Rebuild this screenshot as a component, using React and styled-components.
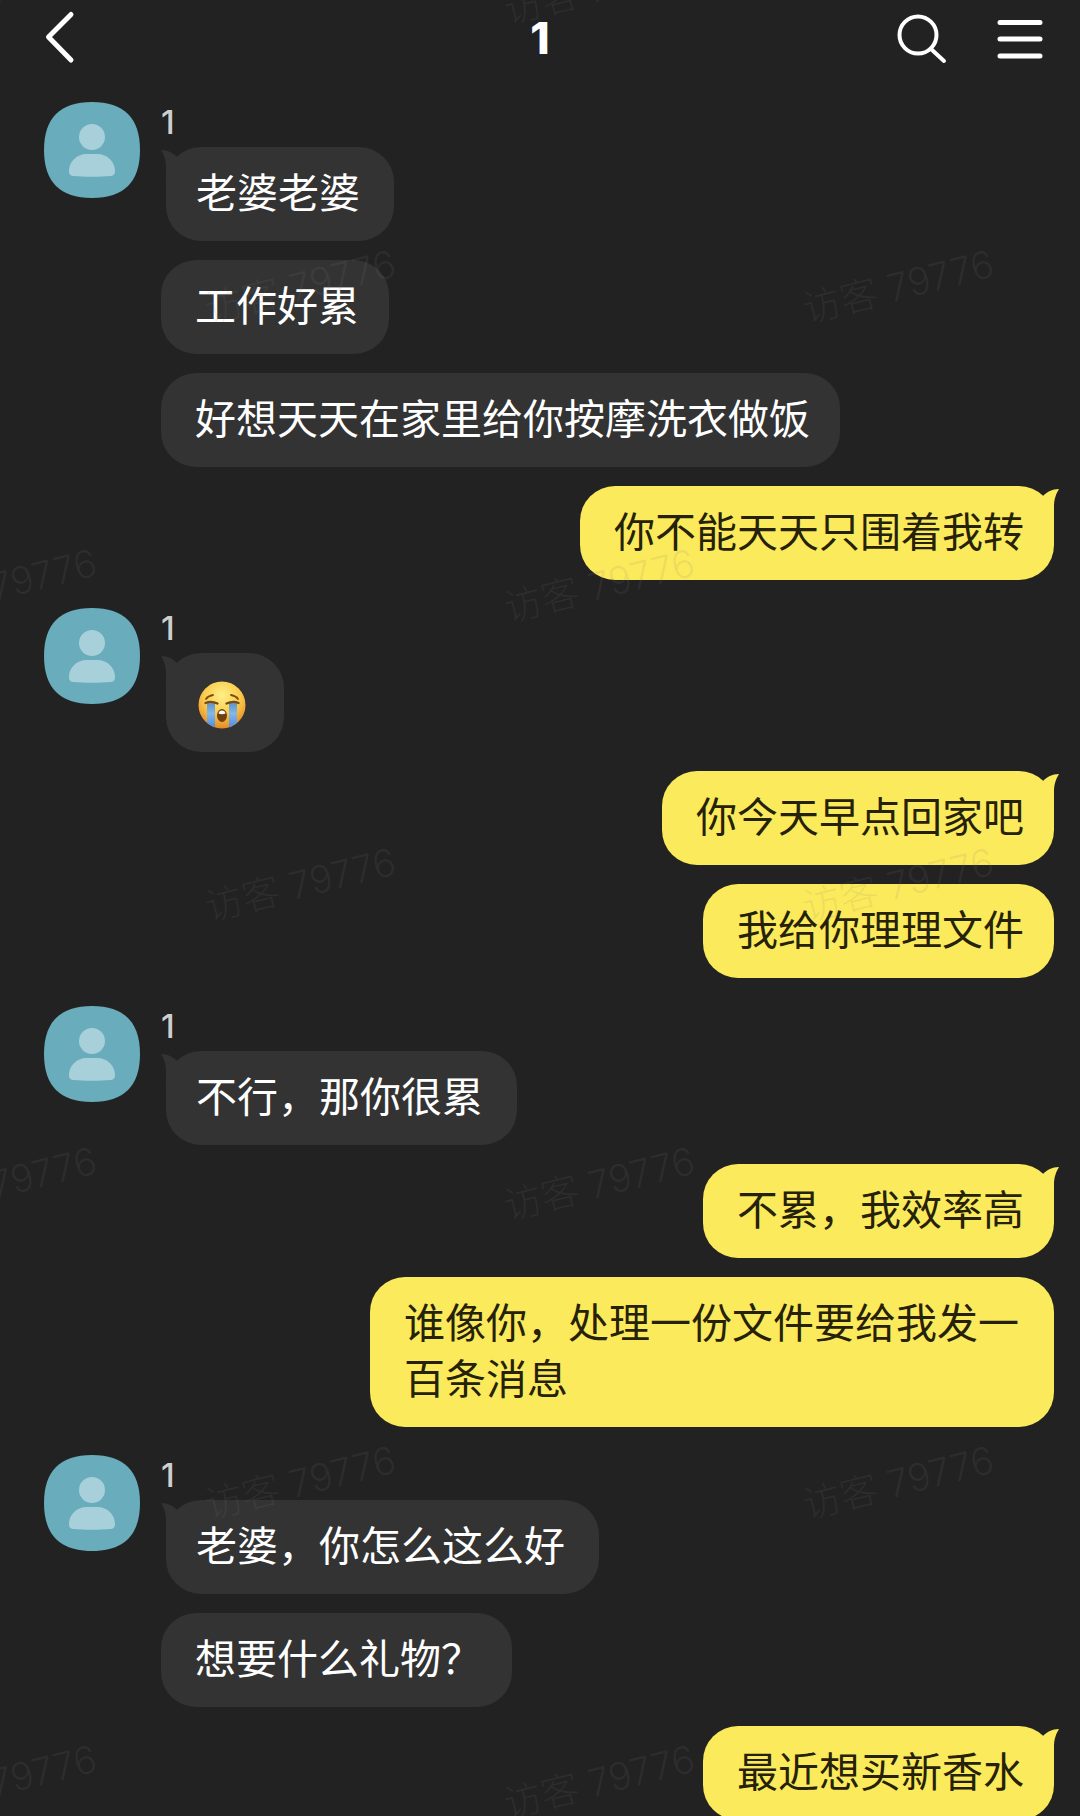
import React from "react";
import styled, { createGlobalStyle, css } from "styled-components";

const GlobalStyle = createGlobalStyle`
  *, *::before, *::after { box-sizing: border-box; }
  body {
    margin: 0;
    background: #222222;
    color: #ffffff;
    font-family: Inter, "Noto Sans CJK SC", sans-serif;
  }
`;

const Screen = styled.div`
  position: relative;
  display: flex;
  flex-direction: column;
  height: 100vh;
  overflow: hidden;
`;

const Header = styled.header`
  display: grid;
  grid-template-columns: 1fr auto 1fr;
  align-items: center;
  flex: none;
  height: 76px;
  padding: 0 36px;
`;

const Title = styled.h1`
  margin: 0;
  font-size: 44px;
  line-height: 76px;
  font-weight: 800;
`;

const Actions = styled.div`
  display: flex;
  justify-content: flex-end;
  gap: 40px;
`;

const IconButton = styled.button`
  display: flex;
  align-items: center;
  justify-content: center;
  justify-self: start;
  width: 56px;
  height: 76px;
  padding: 0;
  border: 0;
  background: none;
  color: inherit;
  cursor: pointer;

  svg {
    flex: none;
    fill: none;
    stroke: currentColor;
    stroke-width: 5;
    stroke-linecap: round;
    stroke-linejoin: round;
  }
`;

const Chat = styled.main`
  display: flex;
  flex-direction: column;
  padding: 25px 26px 0 44px;
`;

const Group = styled.section`
  display: flex;
  align-items: flex-start;
  gap: 21px;
  justify-content: ${(p) => (p.$mine ? "flex-end" : "flex-start")};
  margin-top: ${(p) => (p.$mine ? 19 : 27)}px;

  &:first-child { margin-top: 0; }
`;

const Avatar = styled.svg`
  flex: none;
  width: 96px;
  height: 97px;
`;

const Thread = styled.div`
  display: flex;
  flex-direction: column;
  align-items: ${(p) => (p.$mine ? "flex-end" : "flex-start")};
`;

const Sender = styled.h2`
  height: 46px;
  margin: 0;
  color: #cfcfcf;
  font-size: 33px;
  line-height: 42px;
  font-weight: 500;
`;

const List = styled.ul`
  display: flex;
  flex-direction: column;
  align-items: inherit;
  gap: 19px;
  margin: 0;
  padding: 0;
  list-style: none;
`;

const Bubble = styled.li`
  position: relative;
  max-width: 684px;
  padding: 15px 30px 23px 34px;
  border-radius: 35px;
  font-family: "Noto Sans CJK SC", sans-serif;
  font-size: 41px;
  line-height: 56px;
  background: ${(p) => (p.$mine ? "#fbea5b" : "#333333")};
  color: ${(p) => (p.$mine ? "#26220a" : "#ffffff")};

  ${(p) => p.$tail && !p.$mine && css`
    margin-left: 5px;
    padding-left: 30px;
    padding-right: 34px;
  `}

  ${(p) => p.$emoji && css`
    padding-top: 24px;
    padding-bottom: 21px;
  `}
`;

const TailShape = styled.svg`
  position: absolute;
  top: 3px;
  width: 16px;
  height: 32px;
  fill: ${(p) => (p.$mine ? "#fbea5b" : "#333333")};
  ${(p) => (p.$mine ? "right: -5px; transform: scaleX(-1);" : "left: -5px;")}
`;

const EmojiShape = styled.svg`
  display: block;
  width: 54px;
  height: 54px;
`;

const WatermarkLayer = styled.div`
  position: absolute;
  inset: -165px 0 0 -149px;
  display: grid;
  grid-template-columns: repeat(4, 299px);
  grid-auto-rows: 299px;
  justify-content: start;
  overflow: hidden;
  pointer-events: none;
`;

const Watermark = styled.span`
  display: flex;
  align-items: center;
  justify-content: center;
  color: rgba(128, 128, 128, 0.12);
  font-size: 38px;
  font-weight: 300;
  white-space: nowrap;
  transform: rotate(-14deg);
`;

const groups = [
  { from: "1", messages: ["老婆老婆", "工作好累", "好想天天在家里给你按摩洗衣做饭"] },
  { mine: true, messages: ["你不能天天只围着我转"] },
  { from: "1", messages: [{ emoji: true }] },
  { mine: true, messages: ["你今天早点回家吧", "我给你理理文件"] },
  { from: "1", messages: ["不行，那你很累"] },
  { mine: true, messages: ["不累，我效率高", "谁像你，处理一份文件要给我发一百条消息"] },
  { from: "1", messages: ["老婆，你怎么这么好", "想要什么礼物？"] },
  { mine: true, messages: ["最近想买新香水"] },
];

function Person() {
  return (
    <Avatar viewBox="0 0 96 97" aria-hidden="true">
      <path
        fill="#69acbb"
        d="M48 1C80 1 96 17 96 49S80 97 48 97S0 81 0 49S16 1 48 1Z"
      />
      <circle cx="48" cy="36" r="13" fill="#a8d0db" />
      <path
        fill="#a8d0db"
        d="M43 53h10c11 0 18 8 18 17c0 4-2 5-5 5c-9 1-27 1-36 0c-3 0-5-1-5-5c0-9 7-17 18-17Z"
      />
    </Avatar>
  );
}

function Tail({ mine }) {
  return (
    <TailShape $mine={mine} viewBox="0 0 16 32" aria-hidden="true">
      <path d="M0 0C7 0 12 3 16 7L16 12L5 32V18C5 10 3 5 0 0Z" />
    </TailShape>
  );
}

function CryingFace() {
  return (
    <EmojiShape viewBox="1 0 54 54" role="img" aria-label="大哭">
      <defs>
        <radialGradient id="face" cx="0.5" cy="0.3" r="0.7">
          <stop offset="0" stopColor="#fff08a" />
          <stop offset="0.55" stopColor="#fbcb4b" />
          <stop offset="1" stopColor="#e58a25" />
        </radialGradient>
        <linearGradient id="tears" x1="0" y1="0" x2="0" y2="1">
          <stop offset="0" stopColor="#5f93c4" />
          <stop offset="0.4" stopColor="#83b8ea" />
          <stop offset="1" stopColor="#4d87d6" />
        </linearGradient>
        <clipPath id="head"><circle cx="27" cy="28" r="23.5" /></clipPath>
      </defs>
      <circle cx="27" cy="28" r="23.5" fill="url(#face)" />
      <g clipPath="url(#head)">
        <path fill="url(#tears)" d="M12 26h8v26h-8ZM34 26h8v26h-8Z" />
      </g>
      <g fill="none" stroke="#7a4c12" strokeWidth="1.8" strokeLinecap="round">
        <path d="M11 22Q13 19 18 18M43 22Q41 19 36 18" />
        <path strokeWidth="2.4" d="M10.500 26Q16 23.500 22.500 26.500M43.500 26Q38 23.500 31.500 26.500" />
      </g>
      <ellipse cx="27" cy="38.500" rx="5" ry="6.500" fill="#70400f" />
      <path fill="#fff" d="M23.500 36.500Q24 33.500 27 33.500T30.500 36.500Q27 38 23.500 36.500Z" />
    </EmojiShape>
  );
}

function MessageGroup({ group }) {
  const { mine = false, from, messages } = group;
  return (
    <Group $mine={mine}>
      {!mine && <Person />}
      <Thread $mine={mine}>
        {!mine && <Sender>{from}</Sender>}
        <List>
          {messages.map((message, i) => (
            <Bubble key={i} $mine={mine} $tail={i === 0} $emoji={message.emoji}>
              {i === 0 && <Tail mine={mine} />}
              {message.emoji ? <CryingFace /> : message}
            </Bubble>
          ))}
        </List>
      </Thread>
    </Group>
  );
}

export default function App() {
  return (
    <>
      <GlobalStyle />
      <Screen>
        <Header>
          <IconButton aria-label="返回">
            <svg width="48" height="56" viewBox="0 0 48 56">
              <path d="M31 4.500L8.500 27L31 50" />
            </svg>
          </IconButton>
          <Title>1</Title>
          <Actions>
            <IconButton aria-label="搜索">
              <svg width="56" height="56" viewBox="0 0 56 56">
                <circle cx="26" cy="25" r="18.500" strokeWidth="4" />
                <path strokeWidth="4" d="M39 39L52 51" />
              </svg>
            </IconButton>
            <IconButton aria-label="菜单">
              <svg width="56" height="56" viewBox="0 0 56 56">
                <path d="M12 12.500H52M12 29H52M12 46H52" />
              </svg>
            </IconButton>
          </Actions>
        </Header>
        <Chat>
          {groups.map((group, i) => (
            <MessageGroup key={i} group={group} />
          ))}
        </Chat>
        <WatermarkLayer aria-hidden="true">
          {Array.from({ length: 28 }, (_, i) => (
            <Watermark key={i}>
              {(Math.floor(i / 4) + i) % 2 === 0 ? "访客 79776" : ""}
            </Watermark>
          ))}
        </WatermarkLayer>
      </Screen>
    </>
  );
}
